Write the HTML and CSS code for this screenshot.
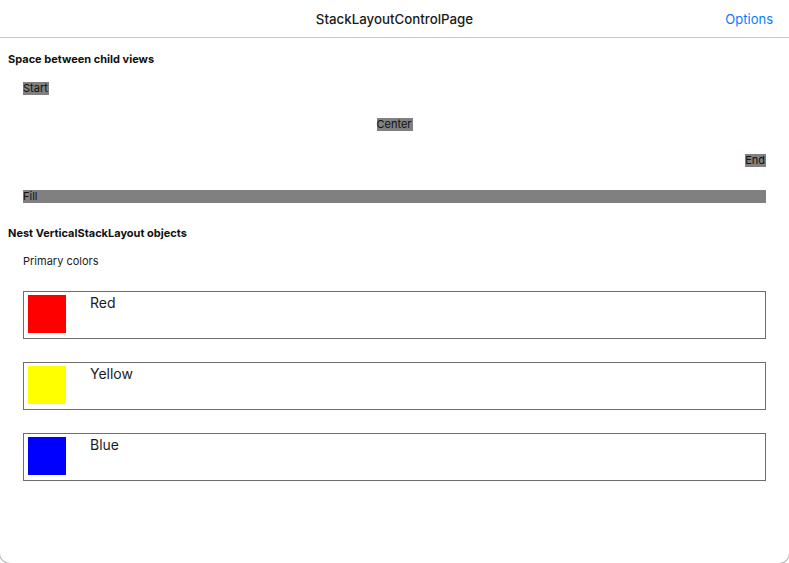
FILE: index.html
```html
<!DOCTYPE html>
<html lang="en">
<head>
<meta charset="utf-8">
<title>StackLayoutControlPage</title>
<link rel="stylesheet" href="styles.css">
</head>
<body>
<div class="window">
  <header class="navbar">
    <div class="nav-side"></div>
    <div class="nav-title">StackLayoutControlPage</div>
    <div class="nav-side nav-right"><span class="nav-action">Options</span></div>
  </header>
  <main class="content">
    <h2 class="section-title">Space between child views</h2>
    <div class="align-stack">
      <div class="align-row row-start"><span class="tag">Start</span></div>
      <div class="align-row row-center"><span class="tag">Center</span></div>
      <div class="align-row row-end"><span class="tag">End</span></div>
      <div class="align-row row-fill"><span class="tag tag-fill">Fill</span></div>
    </div>
    <h2 class="section-title section-gap">Nest VerticalStackLayout objects</h2>
    <div class="nested">
      <div class="caption">Primary colors</div>
      <div class="color-list">
        <div class="color-frame">
          <div class="swatch swatch-red"></div>
          <div class="color-name">Red</div>
        </div>
        <div class="color-frame">
          <div class="swatch swatch-yellow"></div>
          <div class="color-name">Yellow</div>
        </div>
        <div class="color-frame">
          <div class="swatch swatch-blue"></div>
          <div class="color-name">Blue</div>
        </div>
      </div>
    </div>
  </main>
</div>
</body>
</html>
```

FILE: styles.css
```css
html, body {
  margin: 0;
  padding: 0;
  background: #ffffff;
}
body {
  height: 563px;
  overflow: hidden;
  font-family: "Inter", "Liberation Sans", sans-serif;
  color: #1c1c1c;
}
.window {
  margin: 0 -1px;
  height: 563px;
  border: 1px solid #b8b8b8;
  border-top: none;
  border-radius: 0 0 11px 11px;
  background: #ffffff;
  overflow: hidden;
}
.navbar {
  height: 37px;
  border-bottom: 1px solid #c8c8c8;
  display: grid;
  grid-template-columns: 1fr auto 1fr;
  align-items: center;
}
.nav-title {
  font-size: 13.3px;
  font-weight: 500;
  color: #1a1a1a;
}
.nav-right {
  display: flex;
  justify-content: flex-end;
  padding-right: 16px;
}
.nav-action {
  font-size: 13px;
  color: #0a7aff;
}
.content {
  padding: 14px 8px 0 8px;
}
.section-title {
  margin: 0;
  font-size: 11px;
  line-height: 14px;
  font-weight: 700;
  color: #111;
}
.section-gap {
  margin-top: 23px;
}
.align-stack {
  margin: 16px 15px 0 15px;
  display: flex;
  flex-direction: column;
  gap: 23px;
}
.align-row {
  display: flex;
  height: 13px;
}
.row-start { justify-content: flex-start; }
.row-center { justify-content: center; }
.row-end { justify-content: flex-end; }
.tag {
  background: #808080;
  font-size: 11px;
  line-height: 13px;
  color: #111;
  padding: 0 1px 0 0;
}
.tag-fill {
  flex: 1;
}
.nested {
  padding: 14px 15px 0 15px;
}
.caption {
  font-size: 11px;
  line-height: 14px;
  color: #222;
}
.color-list {
  margin-top: 23px;
  display: flex;
  flex-direction: column;
  gap: 23px;
}
.color-frame {
  height: 48px;
  box-sizing: border-box;
  border: 1px solid #6e6e6e;
  padding: 3px 4px;
  display: flex;
  align-items: flex-start;
  gap: 24px;
}
.swatch {
  width: 38px;
  height: 38px;
  flex: none;
}
.swatch-red { background: #ff0000; }
.swatch-yellow { background: #ffff00; }
.swatch-blue { background: #0000ff; }
.color-name {
  font-size: 14px;
  line-height: 16px;
  color: #1c1c1c;
}
```
